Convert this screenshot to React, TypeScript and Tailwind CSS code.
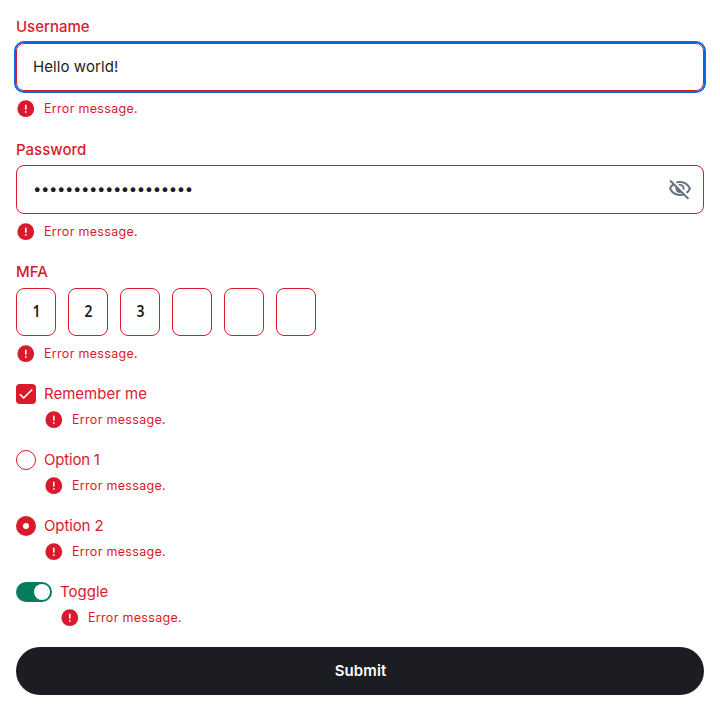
import React from "react";

function ErrorMessage({ className = "" }: { className?: string }) {
  return (
    <div className={`flex h-5 items-center gap-2 text-[12.5px] leading-5 tracking-[0.31px] ${className}`}>
      <svg viewBox="0 0 20 20" className="size-5">
        <circle cx="9.8" cy="9.7" r="8.4" fill="#da192d" />
        <path d="M9.8 6.4v3.7" stroke="white" strokeWidth="1.6" strokeLinecap="round" />
        <circle cx="9.8" cy="12.9" r="0.9" fill="white" />
      </svg>
      <span>Error message.</span>
    </div>
  );
}

function EyeOff() {
  return (
    <svg viewBox="0 0 24 24" className="mb-px size-6" fill="#66707c">
      <path d="m16.1 13.3-1.45-1.45q.225-1.175-.675-2.2-.9-1.025-2.325-.8L10.2 7.4q.425-.2.862-.3Q11.5 7 12 7q1.875 0 3.188 1.312Q16.5 9.625 16.5 11.5q0 .5-.1.938-.1.437-.3.862Zm3.2 3.15-1.45-1.4q.95-.725 1.688-1.588.737-.862 1.262-1.962-1.25-2.525-3.588-4.013Q14.875 6 12 6q-.725 0-1.425.1-.7.1-1.375.3L7.65 4.85q1.025-.425 2.1-.638Q10.825 4 12 4q3.775 0 6.725 2.087Q21.675 8.175 23 11.5q-.575 1.475-1.512 2.738Q20.55 15.5 19.3 16.45Zm.5 6.15-4.2-4.15q-.875.275-1.762.413Q12.95 19 12 19q-3.775 0-6.725-2.087Q2.325 14.825 1 11.5q.525-1.325 1.325-2.463Q3.125 7.9 4.15 7L1.4 4.2l1.4-1.4 18.4 18.4ZM5.55 8.4q-.725.65-1.325 1.425T3.2 11.5q1.25 2.525 3.587 4.012Q9.125 17 12 17q.5 0 .975-.062.475-.063.975-.138l-.9-.95q-.275.075-.525.113-.25.037-.525.037-1.875 0-3.188-1.312Q7.5 13.375 7.5 11.5q0-.275.037-.525.038-.25.113-.525Z" />
    </svg>
  );
}

const label = "h-5 text-[15px] leading-5 font-medium";

export default function App() {
  return (
    <form className="flex h-[720px] w-[720px] flex-col bg-white px-4 pt-[17px] font-['Inter',sans-serif] text-[#da192d]">
      <div className="h-[123px]">
        <div className={label}>Username</div>
        <div className="mt-1.5 flex h-12 items-center rounded-lg border border-[#da192d] px-4 text-[15px] tracking-[0.08px] text-[#1c1d22] outline-2 outline-[#056ae6]">
          Hello world!
        </div>
        <ErrorMessage className="mt-2" />
      </div>
      <div className="h-[122px]">
        <div className={label}>Password</div>
        <div className="mt-[5px] flex h-[49px] items-center justify-between rounded-lg border border-[#da192d] pr-[11px] pl-4 text-[15px] text-[#1c1d22]">
          <span className="tracking-[-0.45px]">••••••••••••••••••••</span>
          <EyeOff />
        </div>
        <ErrorMessage className="mt-2" />
      </div>
      <div className="h-[122px]">
        <div className={label}>MFA</div>
        <div className="mt-1.5 flex gap-3">
          {["1", "2", "3", "", "", ""].map((digit, i) => (
            <div key={i} className="flex h-12 w-10 items-center justify-center rounded-lg border border-[#da192d] font-['Noto_Sans',sans-serif] text-[15.5px] font-semibold text-[#1c1d22]">
              <span className="scale-x-90">{digit}</span>
            </div>
          ))}
        </div>
        <ErrorMessage className="mt-2" />
      </div>
      <div className="h-[66px]">
        <div className="flex h-5 items-center gap-2 text-[15px]">
          <span className="flex size-5 items-center justify-center rounded bg-[#da192d]">
            <svg viewBox="0 0 20 20" className="size-5" fill="none" stroke="white" strokeWidth="1.6"><path d="M3.8 10.2 7.7 14 16.2 5.5" /></svg>
          </span>
          Remember me
        </div>
        <ErrorMessage className="mt-1.5 ml-7" />
      </div>
      <div className="h-[66px]">
        <div className="flex h-5 items-center gap-2 text-[15px] tracking-[-0.2px]">
          <span className="size-5 rounded-full border border-[#da192d]" />
          Option 1
        </div>
        <ErrorMessage className="mt-1.5 ml-7" />
      </div>
      <div className="h-[66px]">
        <div className="flex h-5 items-center gap-2 text-[15px] tracking-[-0.12px]">
          <span className="flex size-5 items-center justify-center rounded-full bg-[#da192d]">
            <span className="size-1.5 rounded-full bg-white" />
          </span>
          Option 2
        </div>
        <ErrorMessage className="mt-1.5 ml-7" />
      </div>
      <div className="h-[65px]">
        <div className="flex h-5 items-center gap-2 text-[15px]">
          <span className="flex h-5 w-9 items-center justify-end rounded-full bg-[#067c5e] p-0.5">
            <span className="size-4 rounded-full bg-white" />
          </span>
          Toggle
        </div>
        <ErrorMessage className="mt-1.5 ml-11" />
      </div>
      <button type="button" className="h-12 w-full shrink-0 rounded-full bg-[#1c1d22] pl-px text-[15px] font-semibold tracking-[0.1px] text-white">
        Submit
      </button>
    </form>
  );
}
